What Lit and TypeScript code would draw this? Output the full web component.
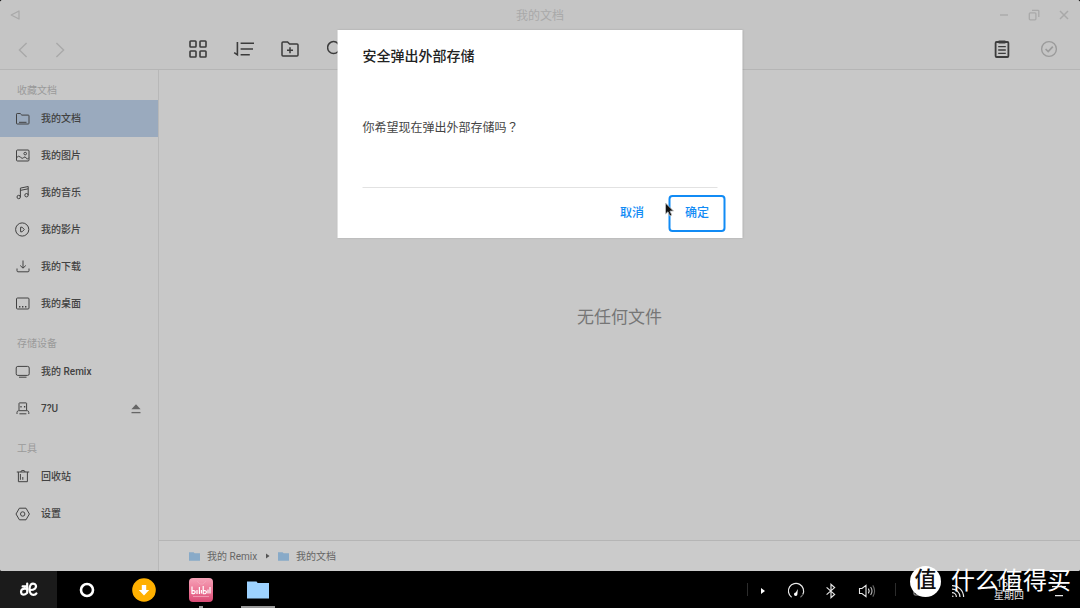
import { LitElement, html, css, svg, TemplateResult } from "lit";
import { customElement, property, state } from "lit/decorators.js";
import { classMap } from "lit/directives/class-map.js";

const icons: Record<string, TemplateResult> = {
  documents: svg`<path d="M1.5 12.5V3.2q0-.7.7-.7h3l1.6 1.6h6.500q.7 0 .7.7v7.500q0 .7-.7.7H2.2q-.7 0-.7-.7M4 11.300h7.500"/>`,
  pictures: svg`<rect x="1.500" y="2" width="12.500" height="11" rx="1"/><circle cx="10.200" cy="5.600" r="1.300"/><path d="M1.500 9.600q2.300-2.600 4-.4t3.200.4 2.500.5 2.600-.4"/>`,
  music: svg`<circle cx="3.700" cy="12" r="1.700"/><circle cx="11.500" cy="10.200" r="1.700"/><path d="M5.400 12V3.100l7.800-1.600v8.700M5.400 5.400l7.800-1.600"/>`,
  videos: svg`<circle cx="7.200" cy="7.500" r="6.600"/><path d="M5.600 5.200v4.600h1.500l2.200-2.300-2.200-2.300z"/>`,
  downloads: svg`<path d="M8 1.500v7.500M5.200 6.500 8 9.200l2.800-2.700M2 9.500v2.300q0 1 1 1h10q1 0 1-1V9.500"/>`,
  desktop: svg`<rect x="1.500" y="2" width="12.500" height="11" rx="1"/><path d="M4 10.800h1.400M7 10.800h1.400M10 10.800h1.400" stroke-width="1.600"/>`,
  computer: svg`<rect x="1.200" y="2.400" width="13" height="9" rx="1.600"/><path d="M4 13.200h7.500"/>`,
  usb: svg`<path d="M4 9V2.400q0-.5.5-.5h6.600q.5 0 .5.5V9M2 13v-1.600q0-1.400 1.400-1.700h9q1.400.3 1.400 1.700V13M4.400 12.800h7"/><path d="M6 5v1.400M9.600 5v1.400" stroke-width="1.300"/>`,
  trash: svg`<path d="M1.800 3h12.400M5.800 3q0-1.600 2.100-1.600T10 3M3.400 3v9.700h9V3M5.400 5v5.800M7.800 8v2.800"/>`,
  settings: svg`<path d="M4.400 2.200h6.600L14.400 8 11 13.800H4.400L1 8z" stroke-linejoin="round"/><circle cx="7.700" cy="8" r="2.200"/>`,
};

interface Place {
  icon: string;
  label: string;
  ejectable?: boolean;
}

const groups: { title: string; places: Place[] }[] = [
  {
    title: "收藏文档",
    places: [
      { icon: "documents", label: "我的文档" },
      { icon: "pictures", label: "我的图片" },
      { icon: "music", label: "我的音乐" },
      { icon: "videos", label: "我的影片" },
      { icon: "downloads", label: "我的下载" },
      { icon: "desktop", label: "我的桌面" },
    ],
  },
  {
    title: "存储设备",
    places: [
      { icon: "computer", label: "我的 Remix" },
      { icon: "usb", label: "7?U", ejectable: true },
    ],
  },
  {
    title: "工具",
    places: [
      { icon: "trash", label: "回收站" },
      { icon: "settings", label: "设置" },
    ],
  },
];

const reset = css`
  * { box-sizing: border-box; }
  button {
    font: inherit;
    color: inherit;
    background: none;
    border: 0;
    padding: 0;
    margin: 0;
    display: flex;
    align-items: center;
    justify-content: center;
    cursor: default;
  }
  svg { display: block; flex: none; fill: none; stroke: currentColor; }
  .solid { stroke: none; }
`;

@customElement("title-bar")
class TitleBar extends LitElement {
  static styles = [reset, css`
    :host {
      display: grid;
      grid-template-columns: 1fr auto 1fr;
      align-items: center;
      height: 30px;
      background: #c5c5c5;
      color: #a9a9a9;
    }
    .title { font-size: 12px; line-height: 20px; font-weight: 400; margin: 0; padding-top: 2px; }
    .controls { display: flex; justify-content: flex-end; padding-right: 1px; }
    .control { width: 30px; height: 30px; }
  `];
  render() {
    return html`
      <button class="control" aria-label="返回">
        <svg width="12" height="12" viewBox="0 0 12 12" stroke-width="1.3"><path d="M10 2v8L2.200 6z" stroke-linejoin="round"/></svg>
      </button>
      <h1 class="title">我的文档</h1>
      <div class="controls">
        <button class="control" aria-label="最小化">
          <svg width="10" height="10" viewBox="0 0 10 10" stroke-width="1.4"><path d="M1 5h8"/></svg>
        </button>
        <button class="control" aria-label="还原">
          <svg width="12" height="12" viewBox="0 0 12 12" stroke-width="1.3"><rect x="1.300" y="3.800" width="6.600" height="7" rx="1"/><path d="M4 1.300h6q.8 0 .8.8v6"/></svg>
        </button>
        <button class="control" aria-label="关闭">
          <svg width="10" height="10" viewBox="0 0 10 10" stroke-width="1.5"><path d="m1 1 8 8M9 1 1 9"/></svg>
        </button>
      </div>`;
  }
}

@customElement("tool-bar")
class ToolBar extends LitElement {
  static styles = [reset, css`
    :host {
      display: flex;
      align-items: center;
      height: 40px;
      background: #c5c5c5;
      border-bottom: 1px solid #b5b5b5;
      color: #3c3c3c;
    }
    .tool { width: 30px; height: 30px; }
    .history { display: flex; gap: 7px; width: 158px; padding-left: 8px; color: #a9a9a9; }
    .tools { display: flex; gap: 16px; flex: 1; padding: 0 0 2px 25px; }
    .actions { display: flex; gap: 17px; padding: 0 16px 2px 0; }
    .disabled { color: #9b9b9b; }
  `];
  render() {
    return html`
      <div class="history">
        <button class="tool" aria-label="后退"><svg width="10" height="16" viewBox="0 0 10 16" stroke-width="1.4"><path d="M8.600 1 1.400 8l7.200 7"/></svg></button>
        <button class="tool" aria-label="前进"><svg width="10" height="16" viewBox="0 0 10 16" stroke-width="1.4"><path d="m1.400 1 7.200 7-7.200 7"/></svg></button>
      </div>
      <div class="tools">
        <button class="tool" aria-label="图标视图"><svg width="18" height="18" viewBox="0 0 18 18" stroke-width="1.600"><rect x="1" y="1" width="6" height="6" rx=".8"/><rect x="11" y="1" width="6" height="6" rx=".8"/><rect x="1" y="11" width="6" height="6" rx=".8"/><rect x="11" y="11" width="6" height="6" rx=".8"/></svg></button>
        <button class="tool" aria-label="排序"><svg width="22" height="16" viewBox="0 0 22 16" stroke-width="1.600"><path d="M4.400 1v12.800L1.200 11.600M7.600 2.200H21M7.600 8H20M7.600 13.800h9.200"/></svg></button>
        <button class="tool" aria-label="新建文件夹"><svg width="18" height="18" viewBox="0 0 18 18" stroke-width="1.500"><path d="M1 15V3q0-1 1-1h4.600l2 2H16q1 0 1 1v10q0 1-1 1H2q-1 0-1-1M9 7.200v6M6 10.200h6"/></svg></button>
        <button class="tool" aria-label="搜索"><svg width="18" height="18" viewBox="0 0 18 18" stroke-width="1.500"><circle cx="6.600" cy="7.600" r="6"/><path d="m11 12 5 5"/></svg></button>
      </div>
      <div class="actions">
        <button class="tool" aria-label="剪贴板"><svg width="16" height="18" viewBox="0 0 16 18" stroke-width="1.800"><rect x="1.600" y="2" width="12.800" height="15" rx="1"/><path d="M4.600 2h6.800" stroke-width="3"/><path d="M4.200 6.600h7.600M4.200 10h7.600M4.200 13.400h7.600" stroke-width="1.400"/></svg></button>
        <button class="tool disabled" aria-label="全选"><svg width="18" height="18" viewBox="0 0 18 18" stroke-width="1.400"><circle cx="9" cy="9" r="7.400"/><path d="m5.600 9 2.600 2.500 4.600-4.800" stroke-width="1.700"/></svg></button>
      </div>`;
  }
}

@customElement("place-list")
class PlaceList extends LitElement {
  @property() selected = "";
  static styles = [reset, css`
    :host { display: block; background: #c8c8c8; border-right: 1px solid #b8b8b8; }
    .heading { margin: 0; padding: 12px 0 0 17px; height: 31px; font-size: 10px; line-height: 20px; font-weight: 400; color: #9a9a9a; }
    .group:first-child { padding-top: 0; }
    .group:first-child .heading { padding-top: 11px; height: 30px; }
    .list { list-style: none; margin: 0; padding: 0; }
    .row { display: flex; align-items: center; height: 37px; color: #424242; }
    .row.current { background: #9aaabe; }
    .place { flex: 1; height: 37px; justify-content: flex-start; gap: 11px; padding-left: 15px; font-size: 10px; line-height: 20px; font-weight: 500; }
    .place svg { stroke-width: 1; }
    .eject { width: 20px; height: 20px; margin-right: 12px; color: #666; }
  `];
  pick(label: string) {
    this.dispatchEvent(new CustomEvent("pick", { detail: label }));
  }
  render() {
    return groups.map((g) => html`
      <section class="group">
        <h2 class="heading">${g.title}</h2>
        <ul class="list">
          ${g.places.map((p) => html`
            <li class=${classMap({ row: true, current: p.label === this.selected })}>
              <button class="place" @click=${() => this.pick(p.label)}>
                <svg width="15" height="15" viewBox="0 0 15 15">${icons[p.icon]}</svg>
                <span>${p.label}</span>
              </button>
              ${p.ejectable ? html`
                <button class="eject" aria-label="弹出">
                  <svg width="10" height="10" viewBox="0 0 10 10"><path d="M5 .2 9.600 5.200H.4z" fill="currentColor" stroke="none"/><path d="M.5 8.600h9" stroke-width="1.300"/></svg>
                </button>` : ""}
            </li>`)}
        </ul>
      </section>`);
  }
}

@customElement("eject-dialog")
class EjectDialog extends LitElement {
  static styles = [reset, css`
    :host { display: block; background: #fff; padding: 16px 17px 6px 25px; box-shadow: 0 0 2px rgba(0, 0, 0, 0.15); }
    .title { margin: 0; font-size: 14px; line-height: 20px; font-weight: 500; color: #222; }
    .message { margin: 51px 8px 49px 0; font-size: 12px; line-height: 20px; color: #444; }
    .mark { font-family: "Noto Sans CJK TC", sans-serif; }
    .buttons { position: relative; display: flex; justify-content: flex-end; gap: 8px; padding-top: 7px; }
    .rule { margin: 0 8px 0 0; border: 0; height: 1px; background: #e2e2e2; }
    .button { width: 57px; height: 37px; border: 2px solid transparent; border-radius: 4px; color: #118bf5; font-size: 12px; line-height: 20px; font-weight: 500; padding-bottom: 2px; }
    .button.primary { border-color: #118bf5; }
    .pointer { position: absolute; right: 51px; top: 14px; }
  `];
  close() {
    this.dispatchEvent(new CustomEvent("close"));
  }
  render() {
    return html`
      <h2 class="title">安全弹出外部存储</h2>
      <p class="message">你希望现在弹出外部存储吗<span class="mark" lang="zh-TW">？</span></p>
      <hr class="rule" />
      <div class="buttons">
        <button class="button" @click=${this.close}>取消</button>
        <button class="button primary" @click=${this.close}>确定</button>
        <svg class="pointer" width="10" height="16" viewBox="0 0 10 16"><path d="M1 1v11l2.500-2.200L5.300 14l2-.9-1.800-4H9z" fill="#111" stroke="#c4c4c4" stroke-width=".8"/></svg>
      </div>`;
  }
}

@customElement("task-bar")
class TaskBar extends LitElement {
  static styles = [reset, css`
    :host { position: relative; display: flex; justify-content: space-between; height: 37px; background: #000; color: #e8e8e8; }
    .apps, .tray { display: flex; }
    .app { position: relative; width: 57px; height: 37px; }
    .start { background: #1b1b1b; margin-right: 1px; color: #fff; }
    .running::after { content: ""; position: absolute; bottom: 0; width: 4px; height: 2px; background: #999; }
    .active::after { width: 34px; }
    .item { height: 37px; padding-top: 2px; }
    .separator { display: flex; align-items: center; justify-content: center; }
    .separator::before { content: ""; width: 1px; height: 13px; background: #2c2c2c; }
    .w6 { width: 6px; }
    .w14 { width: 14px; }
    .w26 { width: 26px; }
    .w30 { width: 30px; }
    .w34 { width: 34px; }
    .w40 { width: 40px; }
    .w42 { width: 42px; }
    .w44 { width: 44px; }
    .clock { display: flex; flex-direction: column; align-items: center; justify-content: flex-end; width: 58px; padding-bottom: 6px; font-size: 10px; line-height: 12px; }
    .brand { position: absolute; right: 9px; bottom: 11px; display: flex; align-items: center; gap: 10px; color: #fff; }
    .seal { display: flex; align-items: center; justify-content: center; width: 31px; height: 31px; border-radius: 50%; background: #fff; color: #111; font-size: 22px; line-height: 24px; font-weight: 500; padding-bottom: 2px; }
    .name { font-size: 24px; line-height: 32px; }
  `];
  render() {
    return html`
      <nav class="apps">
        <button class="app start" aria-label="开始">
          <svg width="19" height="15" viewBox="0 0 19 15" stroke-width="2.200" stroke-linecap="round"><path d="M3.600 4.400h4M8.200 1.600v9.200M8 7Q5.400 6 3.400 7.200 1.200 9 2.600 11.800q2.400 2 5.400-.8M10.600 8q3.400.2 5.400-1.400 2-2.600 0-4.400-2.400-1.400-4.200.4-1.400 1.800-1.200 5.200.2 5 3.800 5 2.200 0 3-1.400"/></svg>
        </button>
        <button class="app" aria-label="主页"><svg width="16" height="16" viewBox="0 0 16 16" stroke-width="2.600"><circle cx="8" cy="8" r="6" stroke="#fff"/></svg></button>
        <button class="app" aria-label="下载"><svg class="solid" width="24" height="24" viewBox="0 0 24 24"><circle cx="12" cy="12" r="11.800" fill="#ffb000"/><path d="M9.800 7h4.400v5h3L12 17.400 6.800 12h3z" fill="#fff"/></svg></button>
        <button class="app running" aria-label="bilibili">
          <svg width="24" height="24" viewBox="0 0 24 24"><defs><linearGradient id="pink" x1="0" y1="0" x2="0" y2="1"><stop offset="0" stop-color="#f6a3b8"/><stop offset=".6" stop-color="#ea6f91"/><stop offset="1" stop-color="#d94b75"/></linearGradient></defs><rect width="24" height="24" rx="4" fill="url(#pink)" stroke="none"/><path d="m8 3 3 3h3l3-3M4 18.500h16" stroke="#f3a6ba" stroke-width=".8"/><path d="M3 8.500v7q3 .8 3.200-1.600-.4-1.800-3-1.200M8 12v4M10.400 9v7M12.400 12v3.600M14.200 8v7.600q3 .6 3.200-1.600-.4-1.800-3-1.200M19 11.600v4M21 9v6.600" stroke="#fff" stroke-width="1.200"/></svg>
        </button>
        <button class="app running active" aria-label="文件"><svg class="solid" width="24" height="18" viewBox="0 0 24 18"><path d="M1 .6h9.500l1.200 1.400H23v15.600H1z" fill="#9dd2ff"/></svg></button>
      </nav>
      <div class="tray">
        <span class="separator w6"></span>
        <button class="item w26" aria-label="展开"><svg class="solid" width="6" height="8" viewBox="0 0 6 8"><path d="M1 1v6l4-3z" fill="#fff"/></svg></button>
        <button class="item w40" aria-label="性能"><svg width="18" height="18" viewBox="0 0 18 18" stroke-width="1.200"><path d="M4.600 15.200A7.600 7.600 0 1 1 15.800 12.400"/><path d="M15.600 12.800q-.8 1.600-2.200 2.400" stroke="#777"/><path d="m10.800 7-.4 5.200a1.700 1.700 0 1 1-1.600-1.600z" fill="#fff" stroke="none"/></svg></button>
        <button class="item w30" aria-label="蓝牙"><svg width="12" height="16" viewBox="0 0 12 16" stroke-width="1.200"><path d="m1.600 4.400 8 7L6 14.600V1.400l3.600 3.200-8 7"/></svg></button>
        <button class="item w42" aria-label="音量"><svg width="18" height="14" viewBox="0 0 18 14" stroke-width="1.100"><path d="M1.500 4.500H4l4-3.200v11.400L4 9.500H1.500zM10.400 4.600q1.600 2.400 0 4.800"/><path d="M12.600 3q2.800 4 0 8" stroke="#bbb"/><path d="M14.800 1.400q3.600 5.600 0 11.200" stroke="#666"/></svg></button>
        <span class="separator w14"></span>
        <button class="item w34" aria-label="截图"><svg width="12" height="12" viewBox="0 0 12 12"><rect x="1" y="1" width="10" height="9" rx="1" stroke="#aaa"/></svg></button>
        <button class="item w44" aria-label="网络"><svg width="14" height="14" viewBox="0 0 14 14" stroke-width="1.200"><path d="M1 1.600A11.400 11.400 0 0 1 12.600 13M1 5.200A7.800 7.800 0 0 1 9 13M1 8.600A4.400 4.400 0 0 1 5.400 13"/><circle cx="1.800" cy="12.200" r=".8" fill="currentColor" stroke="none"/></svg></button>
        <div class="clock"><time>16:27</time><span>星期四</span></div>
        <button class="item w42" aria-label="通知"><svg width="16" height="12" viewBox="0 0 16 12" stroke-width="1.200"><path d="M1 1.600h14M4 10.600h8"/></svg></button>
      </div>
      <div class="brand"><span class="seal">值</span><span class="name">什么值得买</span></div>`;
  }
}

@customElement("app-root")
class AppRoot extends LitElement {
  @state() selected = "我的文档";
  @state() asking = true;
  static styles = [reset, css`
    :host {
      display: flex;
      flex-direction: column;
      min-height: 100vh;
      background: #000;
      font-family: Roboto, "Noto Sans CJK SC", sans-serif;
    }
    .window { position: relative; flex: 1; display: flex; flex-direction: column; border-radius: 3px 3px 2px 2px; overflow: hidden; background: #c8c8c8; }
    .body { flex: 1; display: grid; grid-template-columns: 159px 1fr; }
    .main { display: flex; flex-direction: column; }
    .files { flex: 1; display: flex; align-items: center; justify-content: center; padding-top: 24px; }
    .empty { margin: 0; font-size: 17px; line-height: 24px; color: #767676; }
    .path { display: flex; align-items: center; gap: 7px; height: 31px; padding-left: 30px; border-top: 1px solid #b5b5b5; background: #cbcbcb; }
    .crumb { display: flex; align-items: center; gap: 7px; color: #666; font-size: 10px; line-height: 20px; text-decoration: none; }
    .crumb-label { padding-top: 1px; }
    .dialog { position: absolute; top: 30px; left: 50%; width: 405px; transform: translateX(-50%); }
  `];
  crumb(label: string) {
    return html`<a class="crumb" href="#"><svg class="solid" width="11" height="9" viewBox="0 0 11 9"><path d="M0 .2h4.600l1 1H11v7.600H0z" fill="#88aac8"/></svg><span class="crumb-label">${label}</span></a>`;
  }
  render() {
    return html`
      <div class="window">
        <title-bar></title-bar>
        <tool-bar></tool-bar>
        <div class="body">
          <place-list .selected=${this.selected} @pick=${(e: CustomEvent) => (this.selected = e.detail)}></place-list>
          <main class="main">
            <div class="files"><p class="empty">无任何文件</p></div>
            <nav class="path">
              ${this.crumb("我的 Remix")}
              <svg class="solid" width="7" height="6" viewBox="0 0 7 6"><path d="M2 .6v4.800L5.500 3z" fill="#555"/></svg>
              ${this.crumb(this.selected)}
            </nav>
          </main>
        </div>
        ${this.asking ? html`<eject-dialog class="dialog" role="dialog" aria-label="安全弹出外部存储" @close=${() => (this.asking = false)}></eject-dialog>` : ""}
      </div>
      <task-bar></task-bar>`;
  }
}
